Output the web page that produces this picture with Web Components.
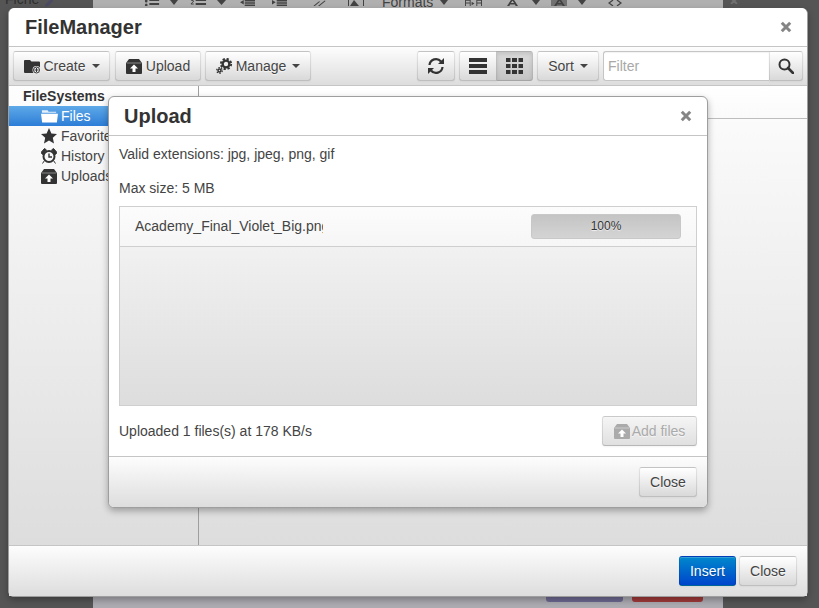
<!DOCTYPE html>
<html><head><meta charset="utf-8"><title>FileManager</title>
<style>
html,body{margin:0;padding:0;background:#555;overflow:hidden}
body{font:14px "Liberation Sans",Arial,sans-serif;color:#333}
</style></head><body>
<fm-app></fm-app>
<script>
const ICONS={
 create:'<svg viewBox="-1 0 18 16" width="18" height="16"><path d="M0 3a1 1 0 0 1 1-1h5l1.500 1.500H15a1 1 0 0 1 1 1V14a1 1 0 0 1-1 1H1a1 1 0 0 1-1-1z" fill="currentColor"/><circle cx="12.500" cy="12" r="4" fill="#eee"/><circle cx="12.500" cy="12" r="3" fill="none" stroke="currentColor" stroke-width="1"/><path d="M10.500 12h4M12.500 10v4" stroke="currentColor" stroke-width="1"/></svg>',
 upload:'<svg viewBox="0 0 16 16" width="16" height="16"><path d="M3 1h10l3 4v10a1 1 0 0 1-1 1H1a1 1 0 0 1-1-1V5z" fill="currentColor"/><path d="M8 6.500l4 4H9.500V14h-3v-3.500H4z" fill="#fff"/><path d="M.6 5h14.800" stroke="#fff" stroke-width=".7" opacity=".6"/></svg>',
 manage:'<svg viewBox="0 0 18 16" width="18" height="16"><circle cx="10" cy="6" r="3.400" fill="none" stroke="currentColor" stroke-width="2.400"/><circle cx="10" cy="6" r="5.200" fill="none" stroke="currentColor" stroke-width="1.800" stroke-dasharray="2.300 1.780"/><circle cx="3.500" cy="12.500" r="1.500" fill="none" stroke="currentColor" stroke-width="1.500"/><circle cx="3.500" cy="12.500" r="2.800" fill="none" stroke="currentColor" stroke-width="1.200" stroke-dasharray="1.500 1.430"/></svg>',
 refresh:'<svg viewBox="0 0 18 18" width="18" height="18"><path d="M2.500 8A6.500 6.500 0 0 1 14 4.500" fill="none" stroke="currentColor" stroke-width="2.200"/><path d="M11 7h6V1z" fill="currentColor"/><path d="M15.500 10A6.500 6.500 0 0 1 4 13.500" fill="none" stroke="currentColor" stroke-width="2.200"/><path d="M7 11H1v6z" fill="currentColor"/></svg>',
 list:'<svg viewBox="0 0 18 16" width="18" height="16"><path d="M0 0h18v4H0zM0 6h18v4H0zM0 12h18v4H0z" fill="currentColor"/></svg>',
 grid:'<svg viewBox="0 0 17 16" width="17" height="16"><path d="M0 0h4.500v4H0zM6 0h5v4H6zM12.500 0H17v4h-4.500zM0 6h4.500v4H0zM6 6h5v4H6zM12.500 6H17v4h-4.500zM0 12h4.500v4H0zM6 12h5v4H6zM12.500 12H17v4h-4.500z" fill="currentColor"/></svg>',
 search:'<svg viewBox="0 0 16 16" width="16" height="16"><circle cx="6.500" cy="6.500" r="5" fill="none" stroke="currentColor" stroke-width="2"/><path d="M10 10l5 5" stroke="currentColor" stroke-width="2.600" stroke-linecap="round"/></svg>',
 folder:'<svg viewBox="0 0 18 16" width="17" height="16"><path d="M1 3V2h6l1 1.500h8v1H1z" fill="currentColor" opacity=".85"/><path d="M0 5.500h18L16.800 15H1.200z" fill="currentColor"/></svg>',
 star:'<svg viewBox="0 0 16 16" width="16" height="16"><path d="M8 0l2.400 5.400 5.600.6-4.200 3.800 1.200 5.700L8 12.600 3 15.500l1.200-5.700L0 6l5.600-.6z" fill="currentColor"/></svg>',
 clock:'<svg viewBox="0 0 16 16" width="16" height="16"><circle cx="8" cy="8.500" r="5.500" fill="none" stroke="currentColor" stroke-width="2"/><path d="M8 5.500v3.500h3" fill="none" stroke="currentColor" stroke-width="1.400"/><path d="M0 4.500L3.500.5l2 1.500L1.500 6.500zM16 4.500L12.500.5l-2 1.500 4 4.500zM3.500 12.500L1.500 15.500M12.500 12.500l2 3" fill="currentColor" stroke="currentColor"/></svg>',
 close:'<svg viewBox="0 0 12 12" width="12" height="12"><path d="M1.800 1.800l8.400 8.400M10.200 1.800l-8.400 8.400" stroke="currentColor" stroke-width="3"/></svg>'
};
function define(name,css,html,extra){
  customElements.define(name,class extends HTMLElement{
    constructor(){super();const r=this.attachShadow({mode:'open'});r.innerHTML='<style>'+css+'</style>'+(typeof html==='function'?html(this):html);}
    connectedCallback(){if(extra)extra(this);}
  });
}
define('fm-icon',':host{display:inline-flex;align-items:center;justify-content:flex-start;line-height:0;flex:none}','',el=>{
  el.shadowRoot.innerHTML+=ICONS[el.getAttribute('name')]||'';
});
define('fm-btn',`
:host{display:inline-flex;box-sizing:border-box;height:30px;align-items:center;justify-content:center;gap:var(--gap,2px);
 border:1px solid;border-color:rgba(0,0,0,.1) rgba(0,0,0,.1) rgba(0,0,0,.25);border-radius:3px;padding:0 10px;
 background:linear-gradient(to bottom,#fff,#d9d9d9);background-color:#f0f0f0;color:#444;
 font:14px/20px "Liberation Sans",Arial,sans-serif;white-space:nowrap;
 text-shadow:0 1px 1px rgba(255,255,255,.75);box-shadow:inset 0 1px 0 rgba(255,255,255,.2),0 1px 2px rgba(0,0,0,.05)}
:host([primary]){background:linear-gradient(to bottom,#08c,#04c);color:#fff;text-shadow:0 1px 1px rgba(0,0,0,.25)}
:host([disabled]){color:#aaa;background:linear-gradient(to bottom,#f5f5f5,#e0e0e0)}
:host([active]){background:linear-gradient(to bottom,#dcdcdc,#c4c4c4);box-shadow:inset 0 2px 4px rgba(0,0,0,.12)}
:host([caret])::after{content:"";width:0;height:0;margin-left:4px;border:4px solid transparent;border-top-color:currentColor;border-bottom:0}
::slotted(fm-icon){color:#333}
:host([disabled]) ::slotted(fm-icon){color:#aaa}
`,'<slot></slot>');
define('fm-tree-item',`
:host{display:flex;height:20px;align-items:center;box-sizing:border-box;padding-left:32px;gap:3px;font:14px/20px "Liberation Sans",Arial,sans-serif;color:#444;white-space:nowrap;text-shadow:0 1px 1px rgba(255,255,255,.5)}
:host([selected]){background:linear-gradient(to bottom,#5fa9e8,#2c7dd7);color:#fff;text-shadow:none}
::slotted(fm-icon){width:17px;color:#333}
:host([selected]) ::slotted(fm-icon){color:#fff}
`,'<slot></slot>');
const caret=(m,w)=>`<svg style="margin:0 0 1px ${m}px" width="${w}" height="5" viewBox="0 0 9 5" preserveAspectRatio="none"><path d="M0 0h9L4.500 5z" fill="currentColor"/></svg>`;
const glyphA='<path d="M0 8l5-8h4l5 8h-3L10 6H4L3 8zM5 4h4L7 1z" fill="currentColor" fill-rule="evenodd"/>';
define('fm-backdrop',`
:host{position:absolute;inset:0;display:flex;flex-direction:column;justify-content:space-between;background:#555;overflow:hidden}
.top,.bot{display:flex;flex:none}
.top{height:8px}.bot{height:11px}
.side{width:93px;flex:none;position:relative;overflow:hidden;color:#2e2e2e}
.t{display:block;margin:-9px 0 0 5px;font:14px/16px "Liberation Sans",Arial,sans-serif;white-space:nowrap}
.bar{width:630px;flex:none;background:#b0b0b0;display:flex;align-items:flex-end;overflow:hidden;color:#424242;height:8px;box-sizing:border-box;padding-bottom:2px}
.bar svg{flex:none;display:block}
.f{font:14px/16px "Liberation Sans",Arial,sans-serif;flex:none;margin-bottom:-4px;width:51px;overflow:hidden;margin-left:18px;white-space:nowrap}
.bar2{width:630px;flex:none;background:#adacb3;display:flex;align-items:flex-start;gap:9px;padding-left:453px;box-sizing:border-box}
.p{width:77px;height:6px;margin-top:-1px;background:#6e6a93;border-radius:0 0 3px 3px}
.r{width:71px;height:6px;margin-top:-1px;background:#a23a3a;border-radius:0 0 3px 3px}
.hl{margin-left:11px;width:16px;height:6px;background:#717171;display:flex;justify-content:center;flex:none}
`,`
<div class="top"><div class="side"><span class="t">Fiche</span>
<svg viewBox="0 0 12 8" width="11" height="8" style="position:absolute;left:43px;top:-1px"><path d="M2 8l1-3 5-5h3v2L6 7z" fill="#4c4a63"/></svg></div>
<div class="bar">
<svg style="margin:0 0 0 51px" width="16" height="6" viewBox="0 0 18 6" preserveAspectRatio="none"><path d="M6 0h11v2H6zM6 4h11v2H6z" fill="currentColor" transform="translate(0 -1)"/><circle cx="2.500" cy="1" r="1.500" fill="currentColor"/><circle cx="2.500" cy="5" r="1.500" fill="currentColor"/></svg>
${caret(10,8)}
<svg style="margin:0 0 0 12px" width="17" height="6" viewBox="0 0 18 6" preserveAspectRatio="none"><path d="M6 0h11v2H6zM6 4h11v2H6z" fill="currentColor" transform="translate(0 -1)"/><path d="M1 0l3 1-3 3h3" fill="none" stroke="currentColor"/></svg>
${caret(10,9)}
<svg style="margin:0 0 0 14px" width="15" height="6" viewBox="0 0 16 8" preserveAspectRatio="none"><path d="M5 0h11v2H5zM5 3h11v2H5zM5 6h11v2H5zM0 3l4-3v6z" fill="currentColor"/></svg>
<svg style="margin:0 0 0 17px" width="15" height="6" viewBox="0 0 16 8" preserveAspectRatio="none"><path d="M5 0h11v2H5zM5 3h11v2H5zM5 6h11v2H5zM4 3L0 0v6z" fill="currentColor"/></svg>
<svg style="margin:0 0 0 26px" width="15" height="6" viewBox="0 0 16 8" preserveAspectRatio="none"><path d="M1 8l6-6M6 8l7-7" stroke="currentColor" fill="none" stroke-width="1.300"/></svg>
<svg style="margin:0 0 0 20px" width="16" height="6" viewBox="0 0 16 8" preserveAspectRatio="none"><path d="M0 0h1v8H0zM15 0h1v8h-1z" fill="currentColor"/><path d="M2 8l4-8 5 8z" fill="currentColor"/></svg>
<span class="f">Formats</span>
${caret(7,8)}
<svg style="margin:0 0 0 17px" width="17" height="6" viewBox="0 0 18 7" preserveAspectRatio="none"><path d="M0 0h6v7H5V4H1v3H0zM1 1v2h4V1zM12 0h6v7h-1V4h-4v3h-1zM13 1v2h4V1zM7 2l3 2-3 2z" fill="currentColor"/></svg>
<svg style="margin:0 0 0 25px" width="11" height="6" viewBox="0 0 14 8" preserveAspectRatio="none">${glyphA}</svg>
${caret(14,8)}
<span class="hl"><svg width="11" height="6" viewBox="0 0 14 8" preserveAspectRatio="none">${glyphA}</svg></span>
${caret(11,8)}
<svg style="margin:0 0 0 22px" width="14" height="6" viewBox="0 0 14 7" preserveAspectRatio="none"><path d="M5 0L1 3.500 5 7M9 0l4 3.500L9 7" fill="none" stroke="currentColor" stroke-width="1.300"/></svg>
</div><div class="side" style="flex:1"><svg style="display:block;margin:-2px 0 0 7px" width="8" height="6" viewBox="0 0 8 6"><path d="M1 0l6 6M7 0L1 6" stroke="#6f6f6f" stroke-width="2"/></svg></div></div>
<div class="bot"><div class="side"></div><div class="bar2"><div class="p"></div><div class="r"></div></div></div>
`);
define('fm-window',`
:host{position:absolute;left:8px;top:8px;width:800px;height:589px;box-sizing:border-box;display:flex;flex-direction:column;background:#fff;border-radius:6px;box-shadow:0 3px 7px rgba(0,0,0,.3);border:1px solid #9e9e9e;border-top:0;overflow:visible;font:14px "Liberation Sans",Arial,sans-serif}
header{flex:none;height:39px;box-sizing:border-box;display:flex;align-items:center;justify-content:space-between;padding:0 15px 1px 16px;border-bottom:1px solid #c5c5c5;background:#fff;border-radius:6px 6px 0 0}
h1{margin:0;font:bold 20px/24px "Liberation Sans",Arial,sans-serif;color:#333}
.x{color:#858585;display:flex}
.tb{flex:none;height:39px;box-sizing:border-box;border-bottom:1px solid #c5c5c5}
.mid{flex:1;min-height:0;display:flex;background:linear-gradient(to bottom,#fdfdfd,#ddd)}
.ft{flex:none;height:51px;box-sizing:border-box;border-top:1px solid #c5c5c5;background:linear-gradient(to bottom,#fdfdfd,#ddd);border-radius:0 0 5px 5px}
`,`
<header><h1><slot name="title"></slot></h1><span class="x"><slot name="close"></slot></span></header>
<div class="tb"><slot name="toolbar"></slot></div>
<div class="mid"><slot name="main"></slot></div>
<div class="ft"><slot name="foot"></slot></div>
<slot name="overlay"></slot>
`);
define('fm-bar',`
:host{display:flex;height:100%;box-sizing:border-box;align-items:center;padding:var(--pad,0 4px);gap:var(--bar-gap,4px);background:var(--bar-bg,linear-gradient(to bottom,#fdfdfd,#ddd))}
:host([end]){justify-content:flex-end}
`,'<slot></slot>');
define('fm-group',`
:host{display:inline-flex;height:30px}
::slotted(*:first-child){border-radius:3px 0 0 3px}
::slotted(*:last-child){border-radius:0 3px 3px 0;margin-left:-1px}
`,'<slot></slot>');
define('fm-filter',`
:host{display:flex;width:200px;height:30px;box-sizing:border-box}
.i{flex:1;box-sizing:border-box;border:1px solid #c5c5c5;border-right:0;border-radius:3px 0 0 3px;background:#fff;color:#a8a8a8;font:14px/28px "Liberation Sans",Arial,sans-serif;padding:0 4px;box-shadow:inset 0 1px 1px rgba(0,0,0,.05)}
::slotted(fm-btn){border-radius:0 3px 3px 0;width:34px;padding:0}
`,'<div class="i">Filter</div><slot></slot>');
define('fm-tree',`
:host{display:block;width:190px;flex:none;box-sizing:border-box;border-right:1px solid #9e9e9e}
.h{font:bold 14px/20px "Liberation Sans",Arial,sans-serif;padding-left:14px;color:#333}
`,'<div class="h">FileSystems</div><slot></slot>');
define('fm-pane',`
:host{display:block;flex:1}
.hd{height:32px;background:linear-gradient(#fff,#fafafa);border-bottom:1px solid #bdbdbd}
`,'<div class="hd"></div>');
define('fm-dialog',`
:host{position:absolute;left:99px;top:88px;width:600px;height:412px;box-sizing:border-box;display:flex;flex-direction:column;background:#fff;border:1px solid #9e9e9e;border-radius:6px;box-shadow:0 3px 7px rgba(0,0,0,.3);font:14px "Liberation Sans",Arial,sans-serif;color:#333}
header{flex:none;height:39px;box-sizing:border-box;display:flex;align-items:center;justify-content:space-between;padding:0 15px 1px 15px;border-bottom:1px solid #c5c5c5}
h2{margin:0;font:bold 20px/24px "Liberation Sans",Arial,sans-serif;color:#333}
.x{color:#858585;display:flex}
.body{flex:1;min-height:0;display:flex;flex-direction:column;padding:1px 10px 0}
.ft{flex:none;height:51px;box-sizing:border-box;border-top:1px solid #c5c5c5;background:linear-gradient(to bottom,#fdfdfd,#ddd);border-radius:0 0 5px 5px}
`,`
<header><h2><slot name="title"></slot></h2><span class="x"><slot name="close"></slot></span></header>
<div class="body"><slot></slot></div>
<div class="ft"><slot name="foot"></slot></div>
`);
define('fm-line',`:host{display:block;height:34px;font:14px/34px "Liberation Sans",Arial,sans-serif;color:#444;white-space:nowrap}`,'<slot></slot>');
define('fm-uploads',`
:host{display:flex;flex-direction:column;height:200px;box-sizing:border-box;border:1px solid #cfcfcf;flex:none;margin-top:1px;background:linear-gradient(to bottom,#f6f6f6,#ddd)}
.row{height:40px;box-sizing:border-box;flex:none;border-bottom:1px solid #cfcfcf;display:flex;align-items:center;justify-content:space-between;padding:0 15px;background:linear-gradient(#fcfcfc,#f6f6f6)}
.name{width:188px;height:20px;margin-top:-2px;overflow:hidden;white-space:nowrap;font:14px/20px "Liberation Sans",Arial,sans-serif;color:#444}
.pg{width:150px;height:25px;box-sizing:border-box;border-radius:3px;border:1px solid #c8c8c8;background:linear-gradient(#c4c4c4,#d4d4d4);text-align:center;font:12px/22px "Liberation Sans",Arial,sans-serif;color:#333;text-shadow:0 1px 1px rgba(255,255,255,.75)}
`,`<div class="row"><div class="name"><slot name="name"></slot></div><div class="pg"><slot name="pct"></slot></div></div>`);
define('fm-status',`
:host{display:flex;align-items:center;justify-content:space-between;height:30px;margin-top:10px;font:14px/20px "Liberation Sans",Arial,sans-serif;color:#444;flex:none}
`,'<slot></slot>');
define('fm-app',`:host{display:block;position:relative;width:819px;height:608px;overflow:hidden}`,`
<fm-backdrop></fm-backdrop>
<fm-window>
 <span slot="title">FileManager</span>
 <fm-icon slot="close" name="close"></fm-icon>
 <fm-bar slot="toolbar">
  <fm-btn caret style="width:97px"><fm-icon name="create"></fm-icon>Create</fm-btn>
  <fm-btn style="width:86px;--gap:4px;margin-left:1px"><fm-icon name="upload"></fm-icon>Upload</fm-btn>
  <fm-btn caret style="width:106px"><fm-icon name="manage"></fm-icon>Manage</fm-btn>
  <span style="flex:1"></span>
  <fm-btn style="width:38px;padding:0"><fm-icon name="refresh"></fm-icon></fm-btn>
  <fm-group><fm-btn style="width:38px;padding:0"><fm-icon name="list"></fm-icon></fm-btn><fm-btn active style="width:37px;padding:0"><fm-icon name="grid"></fm-icon></fm-btn></fm-group>
  <fm-btn caret style="width:62px">Sort</fm-btn>
  <fm-filter><fm-btn><fm-icon name="search"></fm-icon></fm-btn></fm-filter>
 </fm-bar>
 <fm-tree slot="main">
  <fm-tree-item selected><fm-icon name="folder"></fm-icon>Files</fm-tree-item>
  <fm-tree-item><fm-icon name="star"></fm-icon>Favorites</fm-tree-item>
  <fm-tree-item><fm-icon name="clock"></fm-icon>History</fm-tree-item>
  <fm-tree-item><fm-icon name="upload"></fm-icon>Uploads</fm-tree-item>
 </fm-tree>
 <fm-pane slot="main"></fm-pane>
 <fm-bar slot="foot" end style="--pad:0 10px 0 0;--bar-gap:3px"><fm-btn primary style="width:57px;padding:0">Insert</fm-btn><fm-btn style="width:58px;padding:0">Close</fm-btn></fm-bar>
 <fm-dialog slot="overlay">
  <span slot="title">Upload</span>
  <fm-icon slot="close" name="close"></fm-icon>
  <fm-line>Valid extensions: jpg, jpeg, png, gif</fm-line>
  <fm-line>Max size: 5 MB</fm-line>
  <fm-uploads><span slot="name">Academy_Final_Violet_Big.png</span><span slot="pct">100%</span></fm-uploads>
  <fm-status><span>Uploaded 1 files(s) at 178 KB/s</span><fm-btn disabled style="width:95px;padding:0"><fm-icon name="upload"></fm-icon>Add files</fm-btn></fm-status>
  <fm-bar slot="foot" end style="--pad:0 10px 0 0;--bar-bg:none"><fm-btn style="width:58px;padding:0">Close</fm-btn></fm-bar>
 </fm-dialog>
</fm-window>
`);
</script>
</body></html>
